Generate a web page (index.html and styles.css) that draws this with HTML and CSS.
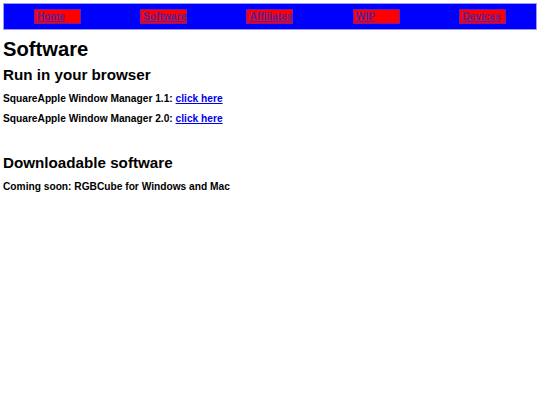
FILE: index.html
```html
<!DOCTYPE html>
<html>
<head>
<meta charset="utf-8">
<title>Software</title>
<link rel="stylesheet" href="styles.css">
</head>
<body>
<nav class="topnav">
  <a class="navlink" href="#">Home</a>
  <a class="navlink" href="#">Software</a>
  <a class="navlink" href="#">Affiliates</a>
  <a class="navlink" href="#">WIP</a>
  <a class="navlink" href="#">Devices</a>
</nav>
<h1 class="page-title">Software</h1>
<h2 class="section-title">Run in your browser</h2>
<p class="item">SquareApple Window Manager 1.1: <a class="textlink" href="#">click here</a></p>
<p class="item">SquareApple Window Manager 2.0: <a class="textlink" href="#">click here</a></p>
<h2 class="section-title section-gap">Downloadable software</h2>
<p class="item">Coming soon: RGBCube for Windows and Mac</p>
</body>
</html>
```
FILE: styles.css
```css
body {
  margin: 3px;
  font-family: "Liberation Sans", Arial, sans-serif;
  color: #000;
  background: #fff;
}
.topnav {
  display: flex;
  justify-content: space-around;
  align-items: center;
  height: 27px;
  box-sizing: border-box;
  background: #0000ff;
  border: 1px solid #9a9aff;
}
.navlink {
  display: block;
  box-sizing: border-box;
  width: 47px;
  height: 15px;
  padding-left: 2px;
  background: #ff0000;
  border: 1px solid #7a1aa0;
  color: #5522a0;
  font-size: 10.2px;
  font-weight: bold;
  line-height: 13px;
  text-decoration: underline;
  white-space: nowrap;
  overflow: hidden;
}
.page-title {
  font-size: 20.2px;
  font-weight: bold;
  margin: 8px 0 5px;
}
.section-title {
  font-size: 15.2px;
  font-weight: bold;
  margin: 0 0 10px;
}
.section-gap {
  margin-top: 30px;
}
.item {
  font-size: 10.2px;
  font-weight: bold;
  margin: 0 0 9px;
}
.textlink {
  color: #0000ee;
  text-decoration: underline;
}
```
